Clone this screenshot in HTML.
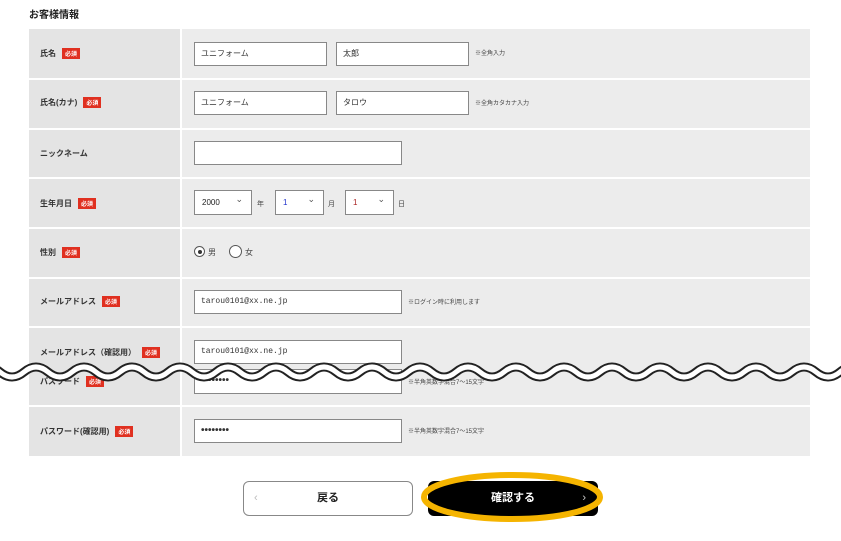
<!DOCTYPE html><html><head><meta charset="utf-8"><style>
body{margin:0;width:841px;height:541px;background:#fff;font-family:"Liberation Sans","Noto Sans CJK JP",sans-serif;position:relative;overflow:hidden;color:#222}
.a{position:absolute}
.lab{position:absolute;left:29px;width:151px;background:#e4e4e4}
.val{position:absolute;left:182px;width:628px;background:#ececec}
.l{position:absolute;left:40px;font-size:8px;font-weight:bold;color:#333}
.req{display:inline-block;background:#e03020;color:#fff;font-size:6px;padding:1px 3px;margin-left:6px;vertical-align:middle}
.in{position:absolute;background:#fff;border:1px solid #888;box-sizing:border-box;height:24px;font-size:8px;padding:0 6px;line-height:22px;color:#333}
.n{position:absolute;font-size:6px;color:#444}
.sel{position:absolute;background:#fff;border:1px solid #888;box-sizing:border-box;height:25px;top:190px;font-size:8px;line-height:23px;padding-left:7px}
.sel:after{content:"⌄";position:absolute;right:8px;top:-3px;font-size:9px;color:#555}
</style></head><body>
<div class="a" style="left:29px;top:6px;font-size:10px;font-weight:bold">お客様情報</div>
<div class="lab" style="top:29px;height:427px"></div>
<div class="val" style="top:29px;height:427px"></div>
<div class="a" style="left:29px;width:781px;top:78px;height:2px;background:#fff"></div>
<div class="a" style="left:29px;width:781px;top:128px;height:2px;background:#fff"></div>
<div class="a" style="left:29px;width:781px;top:177px;height:2px;background:#fff"></div>
<div class="a" style="left:29px;width:781px;top:227px;height:2px;background:#fff"></div>
<div class="a" style="left:29px;width:781px;top:277px;height:2px;background:#fff"></div>
<div class="a" style="left:29px;width:781px;top:326px;height:2px;background:#fff"></div>
<div class="a" style="left:29px;width:781px;top:405px;height:2px;background:#fff"></div>
<div class="a" style="left:180px;width:2px;top:29px;height:427px;background:#fff"></div>

<div class="l" style="top:48px">氏名<span class="req">必須</span></div>
<div class="in" style="left:194px;top:42px;width:133px">ユニフォーム</div>
<div class="in" style="left:336px;top:42px;width:133px">太郎</div>
<div class="n" style="left:475px;top:48px">※全角入力</div>

<div class="l" style="top:97px">氏名(カナ)<span class="req">必須</span></div>
<div class="in" style="left:194px;top:91px;width:133px">ユニフォーム</div>
<div class="in" style="left:336px;top:91px;width:133px">タロウ</div>
<div class="n" style="left:475px;top:98px">※全角カタカナ入力</div>

<div class="l" style="top:148px">ニックネーム</div>
<div class="in" style="left:194px;top:141px;width:208px"></div>

<div class="l" style="top:198px">生年月日<span class="req">必須</span></div>
<div class="sel" style="left:194px;width:58px">2000</div>
<div class="n" style="left:257px;top:199px;font-size:7px">年</div>
<div class="sel" style="left:275px;width:49px;color:#23c">1</div>
<div class="n" style="left:328px;top:199px;font-size:7px">月</div>
<div class="sel" style="left:345px;width:49px;color:#a22">1</div>
<div class="n" style="left:398px;top:199px;font-size:7px">日</div>

<div class="l" style="top:247px">性別<span class="req">必須</span></div>
<div class="a" style="left:194px;top:246px;width:11px;height:11px;border:1px solid #555;border-radius:50%;background:#fff;box-sizing:border-box"><div class="a" style="left:2.5px;top:2.5px;width:4px;height:4px;border-radius:50%;background:#333"></div></div>
<div class="n" style="left:208px;top:247px;font-size:8px">男</div>
<div class="a" style="left:229px;top:245px;width:13px;height:13px;border:1px solid #555;border-radius:50%;background:#fff;box-sizing:border-box"></div>
<div class="n" style="left:245px;top:247px;font-size:8px">女</div>

<div class="l" style="top:296px">メールアドレス<span class="req">必須</span></div>
<div class="in" style="left:194px;top:290px;width:208px;font-family:'Liberation Mono',monospace">tarou0101@xx.ne.jp</div>
<div class="n" style="left:408px;top:297px">※ログイン時に利用します</div>

<div class="l" style="top:347px">メールアドレス（確認用）<span class="req">必須</span></div>
<div class="in" style="left:194px;top:340px;width:208px;font-family:'Liberation Mono',monospace">tarou0101@xx.ne.jp</div>

<div class="l" style="top:376px">パスワード<span class="req">必須</span></div>
<div class="in" style="left:194px;top:369px;width:208px;height:25px;font-weight:bold;font-size:10px">••••••••</div>
<div class="n" style="left:408px;top:377px">※半角英数字混合7〜15文字</div>

<div class="l" style="top:426px">パスワード(確認用)<span class="req">必須</span></div>
<div class="in" style="left:194px;top:419px;width:208px;font-weight:bold;font-size:10px">••••••••</div>
<div class="n" style="left:408px;top:426px">※半角英数字混合7〜15文字</div>

<svg class="a" style="left:0;top:358px" width="841" height="36" viewBox="0 0 841 36">
<path d="M-24 14 q12 -10 24 0 t24 0 t24 0 t24 0 t24 0 t24 0 t24 0 t24 0 t24 0 t24 0 t24 0 t24 0 t24 0 t24 0 t24 0 t24 0 t24 0 t24 0 t24 0 t24 0 t24 0 t24 0 t24 0 t24 0 t24 0 t24 0 t24 0 t24 0 t24 0 t24 0 t24 0 t24 0 t24 0 t24 0 t24 0 t24 0 t24 0 t24 0" fill="none" stroke="#222" stroke-width="9"/>
<path d="M-24 14 q12 -10 24 0 t24 0 t24 0 t24 0 t24 0 t24 0 t24 0 t24 0 t24 0 t24 0 t24 0 t24 0 t24 0 t24 0 t24 0 t24 0 t24 0 t24 0 t24 0 t24 0 t24 0 t24 0 t24 0 t24 0 t24 0 t24 0 t24 0 t24 0 t24 0 t24 0 t24 0 t24 0 t24 0 t24 0 t24 0 t24 0 t24 0 t24 0" fill="none" stroke="#fff" stroke-width="5"/>
</svg>

<div class="a" style="left:243px;top:481px;width:170px;height:35px;border:1px solid #888;border-radius:6px;box-sizing:border-box;background:#fff;text-align:center;line-height:33px;font-size:11px;font-weight:bold">戻る<span class="a" style="left:10px;top:0;color:#bbb;font-weight:normal">‹</span></div>
<div class="a" style="left:428px;top:481px;width:170px;height:35px;border-radius:6px;background:#000;color:#fff;text-align:center;line-height:35px;font-size:11px;font-weight:bold">確認する<span class="a" style="right:12px;top:0;color:#ccc;font-weight:normal">›</span></div>
<svg class="a" style="left:418px;top:470px" width="190" height="56"><ellipse cx="94" cy="27" rx="88" ry="22" fill="none" stroke="#f5b400" stroke-width="6"/></svg>
</body></html>
